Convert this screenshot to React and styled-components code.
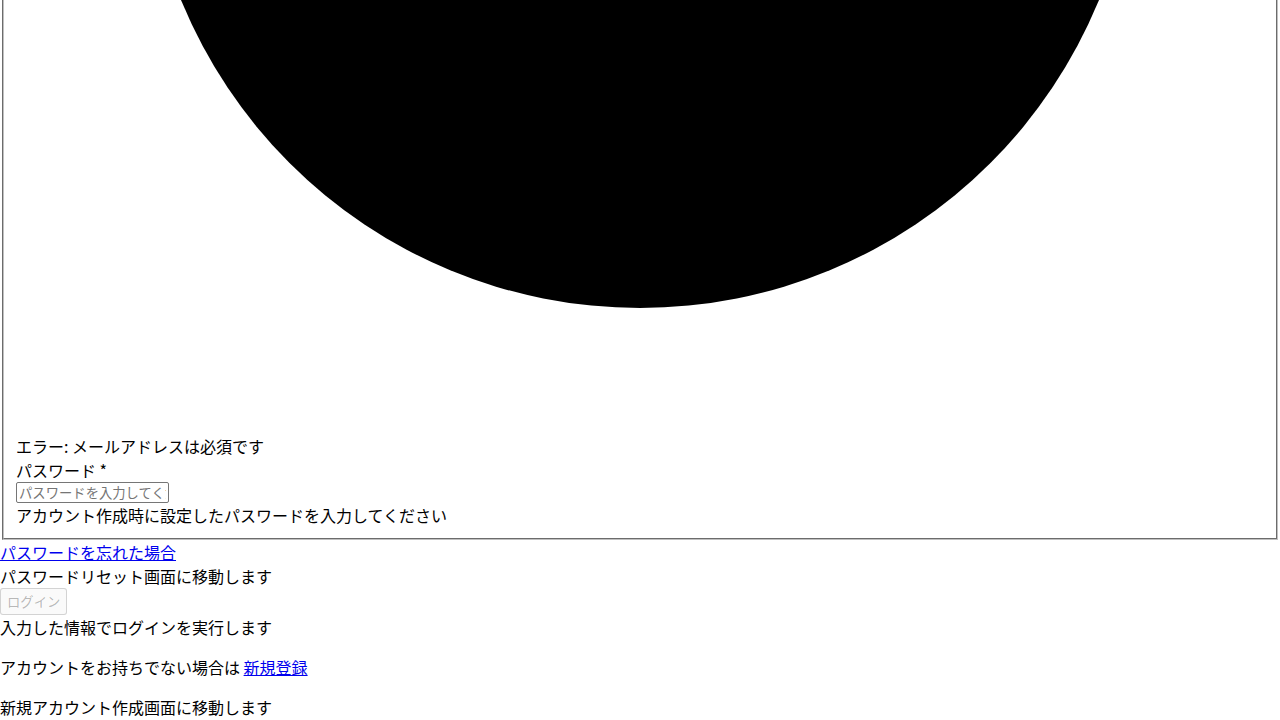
import styled, { createGlobalStyle } from "styled-components";

const GlobalStyle = createGlobalStyle`
  body {
    margin: 0;
    background: #fff;
    color: #000;
    font-family: "Noto Sans CJK JP", "Noto Sans", sans-serif;
    font-size: 16px;
    line-height: 24px;
  }
`;

function App() {
  return (
    <Page>
      <GlobalStyle />
      <Form>
        <Field>
          <IconBox>
            <svg width="100%" height="434" viewBox="0 0 1248 434">
              <circle cx="624" cy="-188" r="496" fill="#000" />
            </svg>
          </IconBox>
          <Line>エラー: メールアドレスは必須です</Line>
          <Line>パスワード *</Line>
          <PasswordInput type="password" placeholder="パスワードを入力してください" />
          <Line>アカウント作成時に設定したパスワードを入力してください</Line>
        </Field>
        <Line>
          <TextLink href="#">パスワードを忘れた場合</TextLink>
        </Line>
        <Line>パスワードリセット画面に移動します</Line>
        <LoginButton disabled>ログイン</LoginButton>
        <Line>入力した情報でログインを実行します</Line>
      </Form>
      <Para>
        アカウントをお持ちでない場合は <TextLink href="#">新規登録</TextLink>
      </Para>
      <Para>新規アカウント作成画面に移動します</Para>
    </Page>
  );
}

export default App;

const Page = styled.div`
  width: 1280px;
`;

const Form = styled.form`
  display: flex;
  flex-direction: column;
  align-items: flex-start;
`;

const Field = styled.fieldset`
  align-self: stretch;
  margin: 0 2px;
  padding: 0 12px 11px;
  border: 2px groove rgb(192, 192, 192);
  border-top: none;
  display: flex;
  flex-direction: column;
  align-items: flex-start;
`;

const IconBox = styled.div`
  align-self: stretch;
  height: 434px;
  overflow: hidden;

  svg {
    display: block;
  }
`;

const Line = styled.div`
  line-height: 24px;
`;

const PasswordInput = styled.input`
  box-sizing: border-box;
  width: 153px;
  height: 21px;
  padding: 1px 2px;
  border: 1px solid #767676;
  border-radius: 2px;
  font-family: "Noto Sans CJK JP", sans-serif;
  font-size: 13.33px;

  &::placeholder {
    color: #757575;
  }
`;

const LoginButton = styled.button`
  box-sizing: border-box;
  height: 27px;
  padding: 0 6px;
  margin: 0;
  border: 1px solid rgba(118, 118, 118, 0.3);
  border-radius: 3px;
  background: rgba(239, 239, 239, 0.3);
  color: rgba(16, 16, 16, 0.3);
  font-family: "Noto Sans CJK JP", sans-serif;
  font-size: 13.33px;
`;

const TextLink = styled.a`
  color: #0000ee;
  text-decoration: underline;
`;

const Para = styled.p`
  margin: 16px 0;
  line-height: 24px;
`;
